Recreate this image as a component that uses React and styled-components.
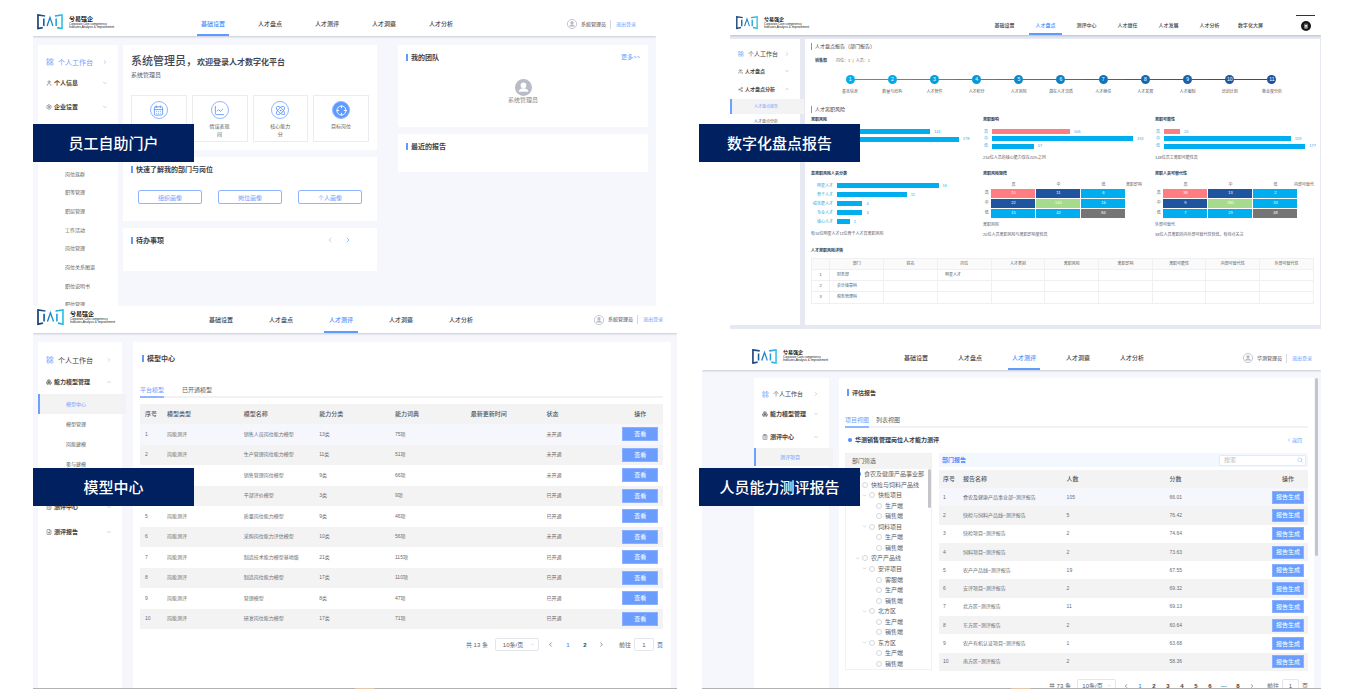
import React from "react";
import styled, { createGlobalStyle } from "styled-components";
import {
    CalendarDays,
    ChartLine,
    ChevronDown,
    ChevronLeft,
    ChevronRight,
    ChevronUp,
    ClipboardList,
    Crosshair,
    Atom,
    Boxes,
    FileSearch,
    LayoutGrid,
    Search,
    Settings,
    Share2,
    User,
    Users
} from "lucide-react";

const GlobalStyle = createGlobalStyle`
    * {
        box-sizing: border-box;
    }
    body {
        margin: 0;
        background: #fff;
        color: #5a5d63;
        font-family: "Liberation Sans", "Noto Sans CJK SC", sans-serif;
        font-size: 6px;
        line-height: 1;
    }
    button, input, select {
        font-family: inherit;
        margin: 0;
        padding: 0;
    }
    a {
        color: inherit;
        text-decoration: none;
    }
    h2, h3, h4, p, figure, ul {
        margin: 0;
        padding: 0;
        list-style: none;
    }
    svg {
        display: block;
        flex: none;
    }
`

/* ---------- page ---------- */

const Page = styled.main`
    display: grid;
    grid-template-columns: minmax(0, 644fr) minmax(0, 622fr);
    gap: 22px;
    padding: 0 38px 0 33px;
    align-items: start;
`
const Figure = styled.figure`
    position: relative;
    padding: ${p => p.$pad};
`
const Banner = styled.figcaption`
    position: absolute;
    top: ${p => p.$top}px;
    left: 0;
    width: 161px;
    height: 38px;
    display: flex;
    align-items: center;
    justify-content: center;
    background: #00205f;
    color: #fff;
    font-size: 15px;
    font-weight: 500;
`
const Screen = styled.div`
    max-height: ${p => p.$max ? p.$max + "px" : "none"};
    overflow: hidden;
`
const Taskbar = styled.div`
    height: 1px;
    background: linear-gradient(90deg, #b3b3b3 50%, #e8c8a4 50%, #e8c8a4 53%, #b3b3b3 53%);
`

/* ---------- header ---------- */

const Bar = styled.header`
    position: relative;
    display: flex;
    align-items: center;
    height: ${p => p.$height}px;
    padding: 0 ${p => p.$right}px 0 4px;
    background: #fff;
    box-shadow: 0 1px 2px rgba(60, 66, 80, 0.25);
`
const Brand = styled.div`
    display: flex;
    align-items: center;
    gap: 6px;
    width: ${p => p.$width}px;
    padding-left: ${p => p.$indent || 0}px;
    padding-bottom: 4px;
    flex: none;
    color: #16181d;
`
const BrandName = styled.div`
    font-size: ${p => p.$size}px;
    font-weight: 700;
    white-space: nowrap;

    small {
        display: block;
        margin-top: 1px;
        font-size: 3px;
        line-height: 3px;
        font-weight: 400;
    }
`
const Nav = styled.nav`
    display: flex;
    align-self: stretch;
    flex: 1;
    gap: ${p => p.$gap}px;
`
const NavLink = styled.a`
    display: flex;
    align-items: center;
    justify-content: center;
    min-width: ${p => p.$width}px;
    padding: 0 4px;
    border-top: 2px solid transparent;
    border-bottom: 2px solid ${p => p.$active ? "#5f9bff" : "transparent"};
    color: ${p => p.$active ? "#4d8dff" : "#43464c"};
    font-size: ${p => p.$size}px;
    font-weight: 500;
    white-space: nowrap;
`
const UserBox = styled.div`
    display: flex;
    align-items: center;
    gap: 4px;
    font-size: 5px;
    color: #3f4248;
    white-space: nowrap;

    a {
        padding: 2px 0 2px 5px;
        border-left: 1px solid #d5d7dc;
        color: #6ea0ff;
    }
`
const DarkAvatar = styled.div`
    align-self: stretch;
    display: flex;
    align-items: center;
    justify-content: center;
    width: 19px;
    border-top: 1px solid #333;
`

/* ---------- side menu ---------- */

const Body = styled.div`
    display: grid;
    grid-template-columns: ${p => p.$columns};
    gap: ${p => p.$gap}px;
    min-height: ${p => p.$min}px;
    padding: ${p => p.$pad};
    background: ${p => p.$bg || "#f5f7fc"};
`
const Side = styled.aside`
    min-width: 0;
    padding-top: ${p => p.$top}px;
    background: #fff;
`
const MenuItem = styled.a`
    display: flex;
    align-items: center;
    gap: ${p => p.$home ? 4 : 2}px;
    height: ${p => p.$height}px;
    margin-top: ${p => p.$before || 0}px;
    padding: 0 10px 0 8px;
    color: ${p => p.$active ? "#6ea0ff" : "#3c3f45"};
    font-size: ${p => p.$size}px;
    font-weight: ${p => p.$home ? 400 : 700};
    white-space: nowrap;

    svg:last-child {
        margin-left: auto;
        color: ${p => p.$active ? "#6ea0ff" : "#a9adb5"};
    }
`
const SubMenu = styled.ul`
    display: grid;
    grid-auto-rows: 1fr;
    min-height: ${p => p.$min}px;
    margin-top: ${p => p.$before || 0}px;
`
const SubItem = styled.li`
    display: flex;
    align-items: center;
    margin-right: ${p => p.$active ? "-4px" : 0};
    padding-left: ${p => p.$indent}px;
    border-left: 2px solid ${p => p.$active ? "#6ea0ff" : "transparent"};
    background: ${p => p.$active ? "#f3f3f4" : "none"};
    color: ${p => p.$active ? "#6ea0ff" : "#5a5d63"};
    font-size: ${p => p.$size || 5}px;
    white-space: nowrap;
`

/* ---------- cards ---------- */

const Stack = styled.div`
    display: flex;
    flex-direction: column;
    gap: 7px;
    min-width: 0;
`
const Card = styled.section`
    min-width: 0;
    min-height: ${p => p.$min || 0}px;
    padding: ${p => p.$pad || "8px"};
    background: #fff;
`
const CardTitle = styled.h3`
    display: flex;
    align-items: center;
    height: ${p => p.$size + 1}px;
    padding-left: ${p => p.$indent || 0}px;
    color: #3f4248;
    font-size: ${p => p.$size}px;
    font-weight: ${p => p.$weight || 700};

    &::before {
        content: "";
        width: ${p => p.$thin ? 1 : 2}px;
        height: 7px;
        margin-right: 3px;
        background: #5f9bff;
    }
`
const CardHead = styled.div`
    display: flex;
    align-items: center;
    justify-content: space-between;
`
const TextLink = styled.a`
    display: flex;
    align-items: center;
    color: #6ea0ff;
    font-size: ${p => p.$size || 6}px;
`
const Welcome = styled.h2`
    margin-top: 3px;
    color: #3f4754;
    font-size: 11px;
    font-weight: 500;
    white-space: nowrap;

    span {
        font-size: 8px;
        font-weight: 700;
    }
`
const Role = styled.p`
    margin: 5px 0 17px;
`
const Tiles = styled.div`
    display: grid;
    grid-template-columns: repeat(4, 1fr);
    gap: 5px;
`
const Tile = styled.a`
    display: flex;
    flex-direction: column;
    align-items: center;
    gap: 3px;
    height: 47px;
    padding-top: 5px;
    border: 1px solid #ececef;
    font-size: 5px;
    line-height: 8px;
    text-align: center;

    span {
        width: 22px;
    }
`
const Ring = styled.div`
    display: flex;
    align-items: center;
    justify-content: center;
    width: 18px;
    height: 18px;
    border: 1px solid #8fb6ff;
    border-radius: 50%;
    background: ${p => p.$solid ? "#5f9bff" : "#fff"};
    color: ${p => p.$solid ? "#fff" : "#5f9bff"};
`
const Portraits = styled.div`
    display: grid;
    grid-template-columns: repeat(3, 1fr);
    gap: 16px;
    margin: 17px 7px 0;
`
const OutlineButton = styled.button`
    height: 14px;
    border: 1px solid #8fb6ff;
    border-radius: 2px;
    background: #fff;
    color: #6ea0ff;
    font-size: 6px;
`
const Arrows = styled.div`
    display: flex;
    gap: 10px;
    padding-right: 17px;
    color: #5f9bff;
`
const IconButton = styled.button`
    display: flex;
    align-items: center;
    justify-content: center;
    border: 0;
    background: none;
    color: ${p => p.$color || "inherit"};
`
const Member = styled.div`
    display: flex;
    flex-direction: column;
    align-items: center;
    gap: 1px;
    margin-top: 18px;
    color: #85888f;
`

/* ---------- tabs, tables, pager ---------- */

const Tabs = styled.div`
    display: flex;
    gap: ${p => p.$gap}px;
    margin-top: ${p => p.$before}px;
    border-bottom: 2px solid #f1f2f5;
`
const Tab = styled.button`
    height: 13px;
    margin-bottom: -2px;
    padding-bottom: 2px;
    border: 0;
    border-bottom: 2px solid ${p => p.$active ? "#8fb6ff" : "transparent"};
    background: none;
    color: ${p => p.$active ? "#6ea0ff" : "#5a5d63"};
    font-size: 6px;
`
const Table = styled.table`
    width: 100%;
    height: ${p => p.$height}px;
    margin-top: ${p => p.$before}px;
    border-collapse: collapse;
    table-layout: fixed;

    th, td {
        height: ${p => p.$row}px;
        padding: 0 0 0 ${p => p.$cell}px;
        text-align: left;
        white-space: nowrap;
        font-size: 5px;
        color: #6a6d73;
    }
    th {
        background: #f3f3f4;
        font-size: 6px;
        font-weight: 500;
        color: #54575d;
    }
    th:last-child, td:last-child {
        padding: 0;
        text-align: center;
    }
    tbody tr:nth-child(even) {
        background: #f3f3f3;
    }
    tbody tr:first-child {
        background: #f5f7fc;
    }
`
const SolidButton = styled.button`
    width: ${p => p.$width}px;
    height: ${p => p.$height}px;
    border: 1px solid #8ab0ff;
    background: #6b9dff;
    color: #fff;
    font-size: 6px;
    line-height: 1;
    vertical-align: middle;
`
const Pager = styled.nav`
    display: flex;
    align-items: center;
    justify-content: flex-end;
    gap: ${p => p.$gap}px;
    margin-top: ${p => p.$before}px;
    font-size: 6px;
    white-space: nowrap;

    b, strong, button {
        width: ${p => p.$item}px;
        color: #3c3f45;
        text-align: center;
    }
    strong {
        color: #5f9bff;
    }
    label {
        display: flex;
        align-items: center;
        gap: 3px;
        padding-left: 5px;
    }
    input {
        width: ${p => p.$input}px;
        height: 13px;
        border: 1px solid #e4e6eb;
        border-radius: 2px;
        background: #fff;
        color: #5a5d63;
        font-size: 6px;
        text-align: center;
    }
`
const SelectBox = styled.div`
    display: flex;
    align-items: center;
    width: ${p => p.$width}px;
    height: 13px;
    padding-right: 3px;
    border: 1px solid #e4e6eb;
    border-radius: 2px;
    color: #b4b7be;

    select {
        flex: 1;
        min-width: 0;
        appearance: none;
        border: 0;
        background: none;
        color: #5a5d63;
        font-size: 6px;
        text-align: center;
        text-align-last: center;
    }
`

/* ---------- inventory report ---------- */

const Report = styled.section`
    min-width: 0;
    padding: 4px 6px 20px;
    background: #fff;
    font-size: 4px;
`
const Info = styled.p`
    display: flex;
    gap: 9px;
    margin: 10px 0 12px 4px;
    color: #6a6d73;

    b {
        color: #3c3f45;
    }
`
const Steps = styled.ol`
    display: grid;
    grid-template-columns: repeat(11, 1fr);
    margin: 0 21px 0 18px;
    padding: 0;
    list-style: none;
`
const Step = styled.li`
    display: grid;
    grid-template-columns: 1fr 9px 1fr;
    align-items: center;
    color: ${p => p.$color};

    i {
        height: 1px;
        background: currentColor;
    }
    i:first-child {
        visibility: ${p => p.$first ? "hidden" : "visible"};
    }
    i:nth-child(3) {
        visibility: ${p => p.$last ? "hidden" : "visible"};
    }
    b {
        height: 9px;
        border-radius: 50%;
        background: ${p => p.$color};
        color: #fff;
        font-size: 5px;
        font-weight: 400;
        line-height: 9px;
        text-align: center;
    }
    span {
        grid-column: 1 / -1;
        margin-top: 6px;
        color: #5a5d63;
        text-align: center;
        white-space: nowrap;
    }
`
const SectionGap = styled.div`
    height: 12px;
`
const Charts = styled.div`
    display: grid;
    grid-template-columns: minmax(0, 172fr) minmax(0, 172fr) minmax(0, 159fr);
    margin-top: ${p => p.$before}px;
`
const ChartTitle = styled.h4`
    margin-bottom: ${p => p.$after}px;
    color: #33363c;
    font-size: 4px;
    font-weight: 700;
`
const Bars = styled.div`
    display: grid;
    grid-auto-rows: 1fr;
    min-height: ${p => p.$min}px;
`
const BarRow = styled.div`
    display: grid;
    grid-template-columns: ${p => p.$label}px minmax(0, 1fr);
    gap: 4px;
    align-items: center;
    color: #35a9dd;
    text-align: right;
    white-space: nowrap;
`
const Track = styled.div`
    display: flex;
    align-items: center;
    gap: 4px;
`
const BarFill = styled.div`
    flex: none;
    height: 5px;
    background: ${p => p.$red ? "#ff7c80" : "#00aeef"};
`
const Caption = styled.p`
    margin-top: ${p => p.$before}px;
    white-space: nowrap;
`
const MatrixTable = styled.table`
    width: 159px;
    max-width: 100%;
    table-layout: fixed;
    border-collapse: collapse;

    th, td {
        height: 10px;
        padding: 0;
        font-size: 4px;
        font-weight: 400;
        line-height: 4px;
        text-align: center;
    }
    thead th {
        height: 6px;
        white-space: nowrap;
    }
    td {
        border: 1px solid #fff;
        color: #fff;
    }
    td:last-child {
        border: 0;
    }
`
const MatrixCell = styled.td`
    background: ${p => p.$color};
`
const EdgeText = styled.span`
    display: flex;
    justify-content: flex-end;
`
const DetailTable = styled.table`
    width: 100%;
    height: 46px;
    border-collapse: collapse;
    table-layout: fixed;

    th, td {
        height: 11px;
        padding: 0 0 0 7px;
        border: 1px solid #f0f0f2;
        font-size: 4px;
        line-height: 4px;
        text-align: left;
    }
    th {
        padding: 0;
        background: #fafafa;
        font-weight: 400;
        text-align: center;
    }
    td:first-child {
        padding: 0;
        text-align: center;
    }
`

/* ---------- assessment report ---------- */

const ProjectName = styled.h4`
    display: flex;
    align-items: center;
    gap: 3px;
    color: #33363c;
    font-size: 6px;
    font-weight: 700;

    &::before {
        content: "";
        width: 4px;
        height: 4px;
        border-radius: 50%;
        background: #4d8dff;
    }
`
const ProjectHead = styled.div`
    display: flex;
    justify-content: space-between;
    margin: 9px 6px 10px 3px;
`
const Split = styled.div`
    display: grid;
    grid-template-columns: 87px minmax(0, 1fr);
    gap: 7px;
    align-items: start;
`
const Tree = styled.div`
    border: 1px solid #f1f1f3;
`
const TreeHead = styled.div`
    height: 15px;
    padding-left: 6px;
    background: #f3f3f3;
    font-size: 6px;
    line-height: 15px;
`
const TreeScroll = styled.div`
    display: grid;
    grid-template-columns: minmax(0, 1fr) 3px;
    align-items: start;
`
const Thumb = styled.div`
    height: ${p => p.$height}px;
    border-radius: 2px;
    background: #c3c5c9;
`
const TreeList = styled.div`
    display: grid;
    grid-auto-rows: 1fr;
    min-height: 200px;
`
const TreeNode = styled.label`
    display: flex;
    align-items: center;
    gap: 2px;
    padding-left: ${p => 2 + p.$level * 7}px;
    white-space: nowrap;

    svg {
        visibility: ${p => p.$open ? "visible" : "hidden"};
        color: #9a9da4;
    }
    input {
        appearance: none;
        flex: none;
        width: 6px;
        height: 6px;
        margin-right: 1px;
        border: 1px solid #d5d7dc;
        border-radius: 50%;
        background: #fff;
    }
    input:checked {
        border-color: #4d8dff;
        background: #4d8dff;
    }
`
const PanelHead = styled.div`
    display: flex;
    align-items: center;
    justify-content: space-between;
    height: 14px;
    padding: 0 2px 0 3px;
    background: #f3f8ff;
    color: #4d8dff;
    font-weight: 700;
`
const SearchBox = styled.label`
    display: flex;
    align-items: center;
    width: 87px;
    height: 11px;
    padding: 0 2px 0 4px;
    border: 1px solid #e4e9f2;
    border-radius: 1px;
    background: #fff;

    input {
        flex: 1;
        min-width: 0;
        border: 0;
        background: none;
        font-size: 6px;
        line-height: 1;
    }
    input::placeholder {
        color: #b7bac1;
    }
`

function Logo ({ id, width }) {
    return (
        <svg width={width} height={width * 0.6} viewBox="0 0 80 46" fill="none">
            <defs>
                <linearGradient id={id} x1="0" y1="0" x2="80" y2="0" gradientUnits="userSpaceOnUse">
                    <stop offset="0" stopColor="#14356f" />
                    <stop offset="0.5" stopColor="#1f86c9" />
                    <stop offset="1" stopColor="#33c6e8" />
                </linearGradient>
            </defs>
            <g stroke={`url(#${id})`}>
                <path d="M25 5 3 2v42l15-3" strokeWidth="5" />
                <path d="M55 5l22-3v42l-15-3" strokeWidth="5" />
                <path d="M21 13v23M59 13v23" strokeWidth="5" />
                <path d="M31 36 40 10l9 26" strokeWidth="4" />
            </g>
        </svg>
    )
}

function Avatar ({ size, solid }) {
    return (
        <svg width={size} height={size} viewBox="0 0 24 24">
            <circle cx="12" cy="12" r="11" fill={solid ? "#b9bcc7" : "#fff"} stroke="#b9bcc7" strokeWidth="2" />
            <circle cx="12" cy="9" r="4" fill={solid ? "#fff" : "#b9bcc7"} />
            <path d="M5 18c1-4 4-5 7-5s6 1 7 5z" fill={solid ? "#fff" : "#b9bcc7"} />
        </svg>
    )
}

function Header ({ id, height, brand, indent, right, logo, nameSize, items, active, tabWidth, gap, size = 6, user }) {
    return (
        <Bar $height={height} $right={right}>
            <Brand $width={brand} $indent={indent}>
                <Logo id={id} width={logo} />
                <BrandName $size={nameSize}>
                    兮易强企
                    <small>Corporate Core competency<br />Indicates,Analysis &amp; Improvement</small>
                </BrandName>
            </Brand>
            <Nav $gap={gap}>
                {items.map(item => (
                    <NavLink key={item} href="#" $active={item === active} $width={tabWidth} $size={size}>{item}</NavLink>
                ))}
            </Nav>
            {user ? (
                <UserBox>
                    <Avatar size={10} />
                    <span>{user}</span>
                    <a href="#">退出登录</a>
                </UserBox>
            ) : (
                <DarkAvatar>
                    <svg width="10" height="10" viewBox="0 0 20 20">
                        <circle cx="10" cy="10" r="10" fill="#15171c" />
                        <path d="M7 6h6v9H7z" fill="#efe6d8" />
                        <path d="M7 5h6v3H7zM9 11h2v4H9z" fill="#6b5a48" />
                    </svg>
                </DarkAvatar>
            )}
        </Bar>
    )
}

function Item ({ icon: Icon, label, arrow: Arrow, iconColor, iconSize = 6, ...rest }) {
    return (
        <MenuItem href="#" {...rest}>
            <Icon size={iconSize} color={iconColor || "#5a5d63"} />
            {label}
            <Arrow size={6} />
        </MenuItem>
    )
}

function PageSize ({ width, label }) {
    return (
        <SelectBox $width={width}>
            <select aria-label={label} defaultValue="10">
                <option value="10">10条/页</option>
            </select>
            <ChevronDown size={5} />
        </SelectBox>
    )
}

function Cols ({ widths }) {
    return <colgroup>{widths.map((w, i) => <col key={i} style={{ width: w + "%" }} />)}</colgroup>
}

const mainNav = ["基础设置", "人才盘点", "人才测评", "人才洞察", "人才分析"]

/* ---------- 员工自助门户 ---------- */

const PortalColumns = styled.div`
    display: grid;
    grid-template-columns: minmax(0, 254fr) minmax(0, 250fr);
    gap: 21px;
    align-items: start;
`

const portalMenu = ["岗位族群", "职等管理", "职层管理", "工作活动", "岗位管理", "岗位关系图谱", "职位说明书", "职位管理"]

const shortcuts = [
    { label: "日程管理", icon: CalendarDays },
    { label: "情误表现间", icon: ChartLine },
    { label: "核心能力分", icon: Atom },
    { label: "目标岗位", icon: Crosshair, solid: true }
]

function Portal () {
    return (
        <Screen $max={294}>
            <Header id="logo-portal" height={24} brand={160} right={20} logo={26} nameSize={6} items={mainNav}
                active="基础设置" tabWidth={32} gap={25} user="系统管理员" />
            <Body $columns="80px minmax(0, 1fr)" $gap={5} $min={270} $pad="9px 8px 0 5px">
                <Side $top={7}>
                    <Item icon={LayoutGrid} iconColor="#6ea0ff" iconSize={8} label="个人工作台" arrow={ChevronRight} $home $active $height={20} $size={7} />
                    <Item icon={User} label="个人信息" arrow={ChevronDown} $height={22} $size={6} />
                    <Item icon={Settings} label="企业设置" arrow={ChevronDown} $height={25} $size={6} />
                    <SubMenu $min={149} $before={46}>
                        {portalMenu.map(name => <SubItem key={name} $indent={25}><a href="#">{name}</a></SubItem>)}
                    </SubMenu>
                </Side>
                <PortalColumns>
                    <Stack>
                        <Card $min={105}>
                            <Welcome>系统管理员，<span>欢迎登录人才数字化平台</span></Welcome>
                            <Role>系统管理员</Role>
                            <Tiles>
                                {shortcuts.map(({ label, icon: Icon, solid }) => (
                                    <Tile key={label} href="#">
                                        <Ring $solid={solid}><Icon size={11} /></Ring>
                                        <span>{label}</span>
                                    </Tile>
                                ))}
                            </Tiles>
                        </Card>
                        <Card $min={64}>
                            <CardTitle $size={7}>快速了解我的部门与岗位</CardTitle>
                            <Portraits>
                                <OutlineButton>组织画像</OutlineButton>
                                <OutlineButton>岗位画像</OutlineButton>
                                <OutlineButton>个人画像</OutlineButton>
                            </Portraits>
                        </Card>
                        <Card $min={43}>
                            <CardHead>
                                <CardTitle $size={7}>待办事项</CardTitle>
                                <Arrows>
                                    <IconButton aria-label="上一页" $color="#b4b7be"><ChevronLeft size={8} /></IconButton>
                                    <IconButton aria-label="下一页"><ChevronRight size={8} /></IconButton>
                                </Arrows>
                            </CardHead>
                        </Card>
                    </Stack>
                    <Stack>
                        <Card $min={82}>
                            <CardHead>
                                <CardTitle $size={7}>我的团队</CardTitle>
                                <TextLink href="#">更多&gt;&gt;</TextLink>
                            </CardHead>
                            <Member>
                                <Avatar size={17} solid />
                                系统管理员
                            </Member>
                        </Card>
                        <Card $min={38}>
                            <CardTitle $size={7}>最近的报告</CardTitle>
                        </Card>
                    </Stack>
                </PortalColumns>
            </Body>
        </Screen>
    )
}

/* ---------- 模型中心 ---------- */

const models = [
    ["销售人员岗位能力模型", "13类", "75项", "未开通"],
    ["生产管理岗位能力模型", "11类", "51项", "未开通"],
    ["销售管理岗位模型", "9类", "66项", "未开通"],
    ["干部评价模型", "3类", "9项", "已开通"],
    ["质量岗位能力模型", "9类", "46项", "已开通"],
    ["采购岗位能力评估模型", "10类", "56项", "未开通"],
    ["制造技术能力模型基地版", "21类", "115项", "已开通"],
    ["制造岗位能力模型", "17类", "110项", "已开通"],
    ["管理模型", "8类", "47项", "已开通"],
    ["研发岗位能力模型", "17类", "71项", "已开通"]
]

function ModelCenter () {
    return (
        <Screen>
            <Header id="logo-model" height={27} brand={167} right={14} logo={27} nameSize={6} items={mainNav}
                active="人才测评" tabWidth={34} gap={26} user="系统管理员" />
            <Body $columns="84px minmax(0, 1fr)" $gap={11} $min={355} $pad="9px 6px 0 5px">
                <Side $top={8}>
                    <Item icon={LayoutGrid} iconColor="#6ea0ff" iconSize={8} label="个人工作台" arrow={ChevronRight} $home $height={20} $size={7} />
                    <Item icon={Boxes} label="能力模型管理" arrow={ChevronUp} $height={24} $size={6} />
                    <SubMenu $min={80}>
                        <SubItem $active $indent={26}><a href="#">模型中心</a></SubItem>
                        <SubItem $indent={26}><a href="#">模型管理</a></SubItem>
                        <SubItem $indent={26}><a href="#">岗能建模</a></SubItem>
                        <SubItem $indent={26}><a href="#">参与建模</a></SubItem>
                    </SubMenu>
                    <Item icon={ClipboardList} label="测评中心" arrow={ChevronDown} $before={20} $height={25} $size={6} />
                    <Item icon={FileSearch} label="测评报告" arrow={ChevronDown} $height={25} $size={6} />
                </Side>
                <Card $pad="12px 8px 36px 7px">
                    <CardTitle $size={7} $indent={2}>模型中心</CardTitle>
                    <Tabs $before={23} $gap={18}>
                        <Tab $active>平台模型</Tab>
                        <Tab>已开通模型</Tab>
                    </Tabs>
                    <Table $height={225} $row={20} $before={6} $cell={5}>
                        <Cols widths={[4.2, 14.7, 14.4, 14.5, 14.5, 14.5, 14.5, 8.7]} />
                        <thead>
                            <tr>
                                {["序号", "模型类型", "模型名称", "能力分类", "能力词典", "最新更新时间", "状态", "操作"].map(h => <th key={h}>{h}</th>)}
                            </tr>
                        </thead>
                        <tbody>
                            {models.map(([name, kinds, terms, state], i) => (
                                <tr key={name}>
                                    <td>{i + 1}</td>
                                    <td>岗能测评</td>
                                    <td>{name}</td>
                                    <td>{kinds}</td>
                                    <td>{terms}</td>
                                    <td></td>
                                    <td>{state}</td>
                                    <td><SolidButton $width={36} $height={14}>查看</SolidButton></td>
                                </tr>
                            ))}
                        </tbody>
                    </Table>
                    <Pager $before={9} $gap={7} $item={10} $input={20}>
                        <span>共 13 条</span>
                        <PageSize width={44} label="模型每页条数" />
                        <IconButton aria-label="上一页" $color="#b4b7be"><ChevronLeft size={7} /></IconButton>
                        <strong>1</strong>
                        <b>2</b>
                        <IconButton aria-label="下一页"><ChevronRight size={7} /></IconButton>
                        <label>前往<input defaultValue="1" />页</label>
                    </Pager>
                </Card>
            </Body>
            <Taskbar />
        </Screen>
    )
}

/* ---------- 数字化盘点报告 ---------- */

const steps = ["基本信息", "数量与结构", "人才管件", "人才积分", "人才风险", "潜在人才流质", "人才继任", "人才发展", "人才编制", "培训计划", "敬业度分析"]
const stepColors = ["#00aeef", "#04a8e8", "#059fde", "#0797d9", "#078bcd", "#0b80c3", "#1173b9", "#1668ae", "#1a5fa7", "#1d56a0", "#20509c"]

const RED = "#ff7c80"
const NAVY = "#1f559f"
const SKY = "#00adef"
const matrixColors = [[RED, NAVY, SKY], [NAVY, "#a6da8e", SKY], [SKY, SKY, "#757575"]]

function BarChart ({ rows, max, label = 5, min }) {
    return (
        <Bars $min={min}>
            {rows.map(([name, value, red], i) => (
                <BarRow key={i} $label={label}>
                    <span>{name}</span>
                    <Track>
                        <BarFill $red={red} style={{ width: value / max * 100 + "%" }} />
                        {value}
                    </Track>
                </BarRow>
            ))}
        </Bars>
    )
}

function Matrix ({ values, edge }) {
    return (
        <MatrixTable>
            <Cols widths={[5, 28.3, 28.3, 28.3, 10.1]} />
            <thead>
                <tr>
                    <th></th>
                    <th>高</th>
                    <th>中</th>
                    <th>低</th>
                    <th><EdgeText>{edge}</EdgeText></th>
                </tr>
            </thead>
            <tbody>
                {values.map((row, r) => (
                    <tr key={r}>
                        <th>{"高中低"[r]}</th>
                        {row.map((v, c) => <MatrixCell key={c} $color={matrixColors[r][c]}>{v}</MatrixCell>)}
                        <td></td>
                    </tr>
                ))}
            </tbody>
        </MatrixTable>
    )
}

function Inventory () {
    const detailRows = [["财务部", "明星人才"], ["会计核算科", ""], ["税务管理科", ""]]
    return (
        <Screen>
            <Header id="logo-inventory" height={20} brand={254} indent={2} right={6} logo={22} nameSize={5} size={5}
                items={["基础设置", "人才盘点", "测评中心", "人才继任", "人才发展", "人才分析", "数字化大屏"]}
                active="人才盘点" tabWidth={33} gap={8} />
            <Body $columns="70px minmax(0, 1fr)" $gap={5} $min={294} $pad="4px 1px 4px 0" $bg="#e6e9f1">
                <Side $top={6}>
                    <Item icon={LayoutGrid} iconColor="#6ea0ff" iconSize={6} label="个人工作台" arrow={ChevronRight} $home $height={18} $size={6} />
                    <Item icon={Users} iconSize={5} label="人才盘点" arrow={ChevronDown} $height={16} $size={5} />
                    <Item icon={Share2} iconSize={5} label="人才盘点分析" arrow={ChevronUp} $height={20} $size={5} />
                    <SubMenu $min={30}>
                        <SubItem $active $indent={22} $size={4}><a href="#">人才盘点报告</a></SubItem>
                        <SubItem $indent={22} $size={4}><a href="#">人才盘点分析</a></SubItem>
                    </SubMenu>
                </Side>
                <Report>
                    <CardTitle $size={5} $weight={400} $thin>人才盘点报告（部门报告）</CardTitle>
                    <Info><b>销售部</b><span>岗位：1 &nbsp;| &nbsp;人员：1</span></Info>
                    <Steps>
                        {steps.map((name, i) => (
                            <Step key={name} $color={stepColors[i]} $first={i === 0} $last={i === 10}>
                                <i /><b>{i + 1}</b><i /><span>{name}</span>
                            </Step>
                        ))}
                    </Steps>
                    <SectionGap />
                    <CardTitle $size={5} $weight={400} $thin>人才离职风险</CardTitle>
                    <Charts $before={6}>
                        <div>
                            <ChartTitle $after={6}>离职风险</ChartTitle>
                            <BarChart rows={[["", 141], ["", 178]]} max={209} min={15} />
                        </div>
                        <div>
                            <ChartTitle $after={6}>离职影响</ChartTitle>
                            <BarChart rows={[["高", 106, true], ["中", 192], ["低", 57]]} max={222} min={22} />
                            <Caption $before={6}>234位人员的核心能力仅在20%之列</Caption>
                        </div>
                        <div>
                            <ChartTitle $after={6}>离职可能性</ChartTitle>
                            <BarChart rows={[["高", 20, true], ["中", 159], ["低", 177]]} max={188} min={22} />
                            <Caption $before={6}>148位员工离职可能性高</Caption>
                        </div>
                    </Charts>
                    <Charts $before={12}>
                        <div>
                            <ChartTitle $after={5}>高离职风险人员分类</ChartTitle>
                            <BarChart label={22} max={23} min={45}
                                rows={[["明星人才", 16], ["骨干人才", 11], ["绩优能人才", 4], ["专业人才", 4], ["核心人才", 2]]} />
                            <Caption $before={6}>有16位明星人才11位骨干人才高离职风险</Caption>
                        </div>
                        <div>
                            <ChartTitle $after={6}>离职风险矩阵</ChartTitle>
                            <Matrix edge="离职影响" values={[[20, 11, 6], [22, 140, 16], [15, 42, 84]]} />
                            <Caption $before={4}>离职风险</Caption>
                            <Caption $before={6}>20位人员离职风险与离职影响度较高</Caption>
                        </div>
                        <div>
                            <ChartTitle $after={6}>离职人员可替代性</ChartTitle>
                            <Matrix edge="内部可替代" values={[[38, 13, 2], [9, 180, 33], [7, 29, 48]]} />
                            <Caption $before={4}>外部可替代</Caption>
                            <Caption $before={6}>38位人员离职的内外部可替代性较低，有待点关注</Caption>
                        </div>
                    </Charts>
                    <SectionGap />
                    <ChartTitle $after={5}>人才离职风险详情</ChartTitle>
                    <DetailTable>
                        <Cols widths={[3.6, 10.8, 10.7, 10.7, 10.7, 10.7, 10.7, 10.7, 10.7, 10.7]} />
                        <thead>
                            <tr>
                                <th></th>
                                {["部门", "姓名", "岗位", "人才类别", "离职风险", "离职影响", "离职可能性", "内部可替代性", "外部可替代性"].map(h => <th key={h}>{h}</th>)}
                            </tr>
                        </thead>
                        <tbody>
                            {detailRows.map(([dept, post], i) => (
                                <tr key={dept}>
                                    <td>{i + 1}</td>
                                    <td>{dept}</td>
                                    <td></td>
                                    <td>{post}</td>
                                    <td></td>
                                    <td></td>
                                    <td></td>
                                    <td></td>
                                    <td></td>
                                    <td></td>
                                </tr>
                            ))}
                        </tbody>
                    </DetailTable>
                </Report>
            </Body>
        </Screen>
    )
}

/* ---------- 人员能力测评报告 ---------- */

const tree = [
    [0, "食农及健康产品事业部", true],
    [1, "快检与饲料产品线", true],
    [2, "快检项目", true],
    [3, "生产端"],
    [3, "销售端"],
    [2, "饲料项目", true],
    [3, "生产端"],
    [3, "销售端"],
    [1, "农产产品线", true],
    [2, "安评项目", true],
    [3, "客服端"],
    [3, "生产端"],
    [3, "销售端"],
    [2, "北方区", true],
    [3, "生产端"],
    [3, "销售端"],
    [2, "东方区", true],
    [3, "生产端"],
    [3, "销售端"]
]

const reports = [
    ["食农及健康产品事业部", 105, "66.01"],
    ["快检与饲料产品线", 5, "76.42"],
    ["快检项目", 2, "74.64"],
    ["饲料项目", 2, "73.63"],
    ["农产产品线", 19, "67.55"],
    ["安评项目", 2, "69.32"],
    ["北方区", 11, "69.13"],
    ["东方区", 2, "60.64"],
    ["农产有机认证项目", 1, "63.68"],
    ["南方区", 2, "58.36"]
]

const AssessGrid = styled.div`
    min-width: 0;
    display: grid;
    grid-template-columns: minmax(0, 1fr) 3px;
    gap: 1px;
    align-items: start;
`

function Assessment () {
    return (
        <>
            <Screen $max={342}>
                <Header id="logo-assess" height={24} brand={194} indent={46} right={9} logo={25} nameSize={5} items={mainNav}
                    active="人才测评" tabWidth={30} gap={22} user="华测管理员" />
                <Body $columns="75px minmax(0, 1fr)" $gap={10} $min={318} $pad="8px 3px 0 52px">
                    <Side $top={7}>
                        <Item icon={LayoutGrid} iconColor="#6ea0ff" iconSize={7} label="个人工作台" arrow={ChevronRight} $home $height={18} $size={6} />
                        <Item icon={Boxes} label="能力模型管理" arrow={ChevronDown} $height={22} $size={6} />
                        <Item icon={ClipboardList} label="测评中心" arrow={ChevronUp} $height={23} $size={6} />
                        <SubMenu $min={18}>
                            <SubItem $active $indent={24}><a href="#">测评项目</a></SubItem>
                        </SubMenu>
                    </Side>
                    <AssessGrid>
                        <Card $pad="11px 6px 10px 6px">
                            <CardTitle $size={6} $indent={2}>评估报告</CardTitle>
                            <Tabs $before={19} $gap={7}>
                                <Tab $active>项目视图</Tab>
                                <Tab>列表视图</Tab>
                            </Tabs>
                            <ProjectHead>
                                <ProjectName>华测销售管理岗位人才能力测评</ProjectName>
                                <TextLink href="#" $size={5}><ChevronLeft size={6} />返回</TextLink>
                            </ProjectHead>
                            <Split>
                                <Tree>
                                    <TreeHead>部门筛选</TreeHead>
                                    <TreeScroll>
                                        <TreeList>
                                            {tree.map(([level, name, open], i) => (
                                                <TreeNode key={i} $level={level} $open={open}>
                                                    <ChevronDown size={5} />
                                                    <input type="radio" name="dept" defaultChecked={i === 0} />
                                                    {name}
                                                </TreeNode>
                                            ))}
                                        </TreeList>
                                        <Thumb $height={39} />
                                    </TreeScroll>
                                </Tree>
                                <div>
                                    <PanelHead>
                                        部门报告
                                        <SearchBox>
                                            <input placeholder="搜索" aria-label="搜索" />
                                            <Search size={6} color="#8fb6ff" />
                                        </SearchBox>
                                    </PanelHead>
                                    <Table $height={201} $row={18} $before={3} $cell={4}>
                                        <Cols widths={[5.4, 28.1, 27.9, 27.8, 10.8]} />
                                        <thead>
                                            <tr>
                                                {["序号", "报告名称", "人数", "分数", "操作"].map(h => <th key={h}>{h}</th>)}
                                            </tr>
                                        </thead>
                                        <tbody>
                                            {reports.map(([name, people, score], i) => (
                                                <tr key={name}>
                                                    <td>{i + 1}</td>
                                                    <td>{name}–测评报告</td>
                                                    <td>{people}</td>
                                                    <td>{score}</td>
                                                    <td><SolidButton $width={32} $height={13}>报告生成</SolidButton></td>
                                                </tr>
                                            ))}
                                        </tbody>
                                    </Table>
                                    <Pager $before={8} $gap={6} $item={8} $input={17}>
                                        <span>共 73 条</span>
                                        <PageSize width={39} label="报告每页条数" />
                                        <IconButton aria-label="上一页" $color="#b4b7be"><ChevronLeft size={6} /></IconButton>
                                        <strong>1</strong>
                                        {[2, 3, 4, 5, 6, "···", 8].map(n => <b key={n}>{n}</b>)}
                                        <IconButton aria-label="下一页"><ChevronRight size={6} /></IconButton>
                                        <label>前往<input defaultValue="1" />页</label>
                                    </Pager>
                                </div>
                            </Split>
                        </Card>
                        <Thumb $height={178} />
                    </AssessGrid>
                </Body>
            </Screen>
            <Taskbar />
        </>
    )
}

export default function App () {
    return (
        <>
            <GlobalStyle />
            <Page>
                <div>
                    <Figure $pad="12px 21px 0 0">
                        <Portal />
                        <Banner $top={124}>员工自助门户</Banner>
                    </Figure>
                    <Figure $pad="0">
                        <ModelCenter />
                        <Banner $top={162}>模型中心</Banner>
                    </Figure>
                </div>
                <div>
                    <Figure $pad="15px 0 0 31px">
                        <Inventory />
                        <Banner $top={124}>数字化盘点报告</Banner>
                    </Figure>
                    <Figure $pad="17px 0 0 3px">
                        <Assessment />
                        <Banner $top={139}>人员能力测评报告</Banner>
                    </Figure>
                </div>
            </Page>
        </>
    )
}
